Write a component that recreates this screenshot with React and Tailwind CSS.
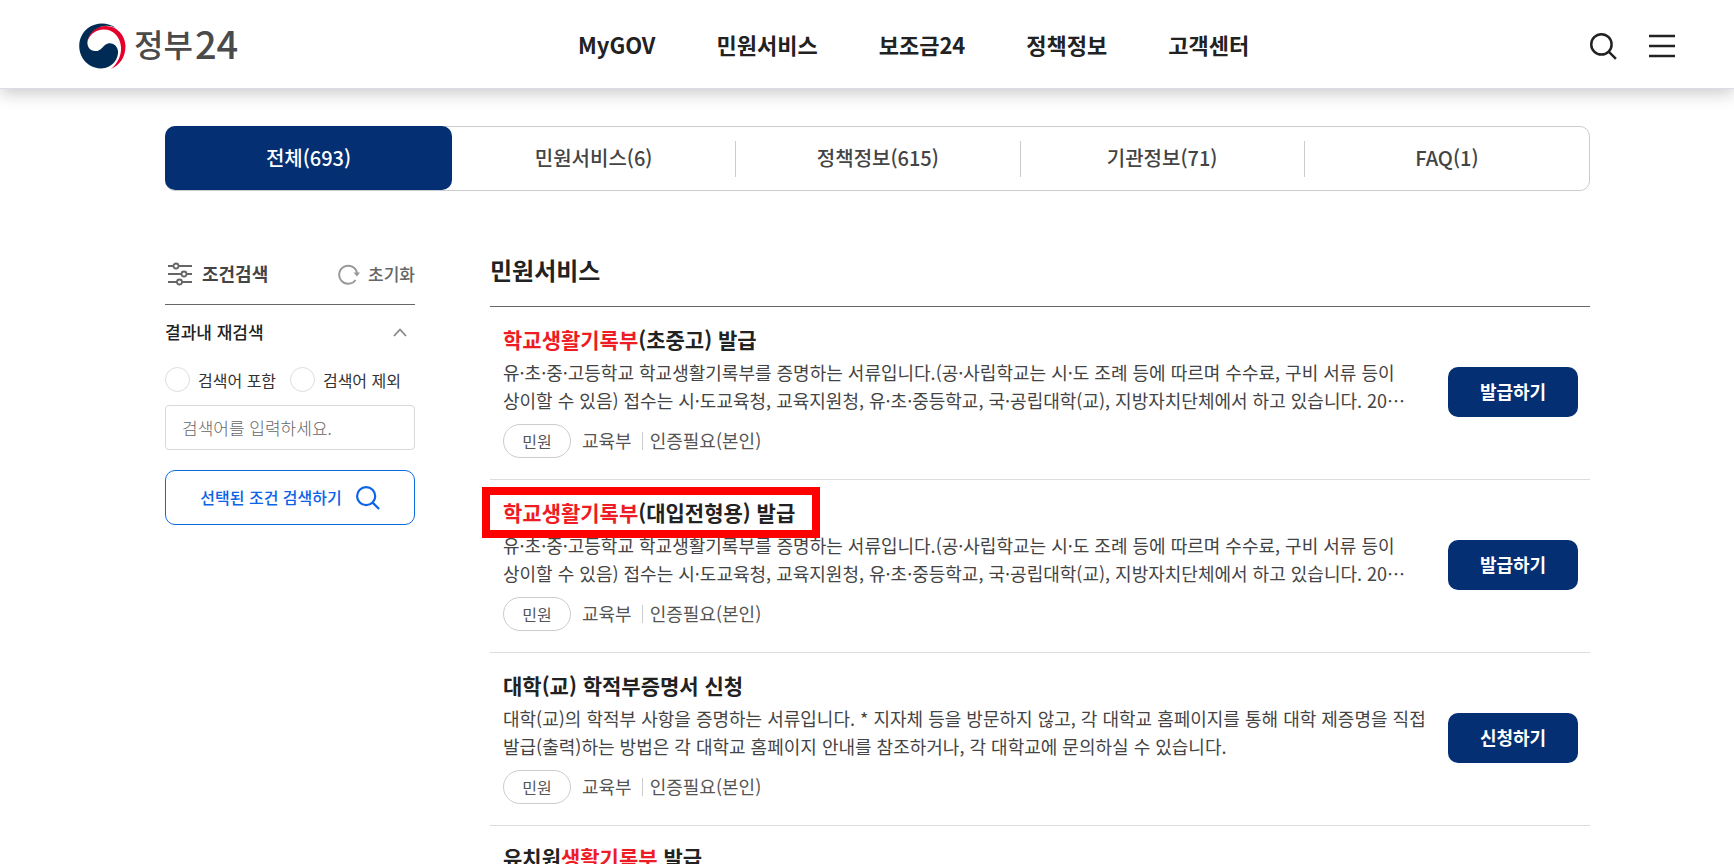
import React from 'react';

const NAV = ['MyGOV', '민원서비스', '보조금24', '정책정보', '고객센터'];

const TABS = ['전체(693)', '민원서비스(6)', '정책정보(615)', '기관정보(71)', 'FAQ(1)'];

const RECORD_LINES = [
  '유·초·중·고등학교 학교생활기록부를 증명하는 서류입니다.(공·사립학교는 시·도 조례 등에 따르며 수수료, 구비 서류 등이',
  '상이할 수 있음) 접수는 시·도교육청, 교육지원청, 유·초·중등학교, 국·공립대학(교), 지방자치단체에서 하고 있습니다. 20⋯',
];

const SERVICES = [
  { before: '', match: '학교생활기록부', after: '(초중고) 발급', lines: RECORD_LINES, action: '발급하기' },
  { before: '', match: '학교생활기록부', after: '(대입전형용) 발급', lines: RECORD_LINES, action: '발급하기', marked: true },
  {
    before: '대학(교) 학적부증명서 신청',
    match: '',
    after: '',
    lines: [
      '대학(교)의 학적부 사항을 증명하는 서류입니다. * 지자체 등을 방문하지 않고, 각 대학교 홈페이지를 통해 대학 제증명을 직접',
      '발급(출력)하는 방법은 각 대학교 홈페이지 안내를 참조하거나, 각 대학교에 문의하실 수 있습니다.',
    ],
    action: '신청하기',
  },
];

function SearchIcon({ className }) {
  return (
    <svg viewBox="0 0 26 26" className={className} fill="none" stroke="currentColor" strokeWidth="2.4" aria-hidden="true">
      <circle cx="11" cy="11" r="9.8" />
      <path d="M18 18l7 7" />
    </svg>
  );
}

function Emblem() {
  return (
    <svg viewBox="0 0 47 46" className="h-[46px] w-[47px]" aria-hidden="true">
      <path fill="#e4002b" d="M8 20C9 9 17 3 27 3C38 3 46 12 46.500 23C46.500 34 41 42 32 46C39 40 42.500 32 42 24C41 13 34 6.500 25 6.500C16 6.500 10 12 8 20Z" />
      <path fill="#002b54" d="M37 5C29 -1 17 -1 9 5C1 11 -2 22 2 32C6 42 17 47 26 45C35 43 39.500 35 39 28C38 21 31 18 26 22C22 26 20 28.500 16 28C10 27.500 7 22 9 16C12 6 25 -1 37 5Z" />
    </svg>
  );
}

function Header() {
  return (
    <header className="relative flex h-[89px] items-center border-b border-[#dcdce6] bg-white pl-[79px] pr-[59px] pt-1 shadow-[0_4px_16px_rgba(0,0,0,0.22)]">
      <a href="#home" className="flex w-[499px] items-center gap-2 text-[#4a4a4a]">
        <Emblem />
        <span className="flex items-center gap-0.5 pb-1.5 font-medium leading-none">
          <span className="text-[32px]">정부</span>
          <span className="text-[38px]">24</span>
        </span>
      </a>
      <nav className="flex flex-1 gap-[61px] pb-1 text-[22px] font-bold leading-8 text-[#222]">
        {NAV.map((item) => (
          <a key={item} href={'#' + item}>{item}</a>
        ))}
      </nav>
      <div className="flex items-center gap-8 text-[#222]">
        <button type="button" aria-label="검색"><SearchIcon className="block size-[27px]" /></button>
        <button type="button" aria-label="전체메뉴">
          <svg viewBox="0 0 26 26" className="block size-[26px]" stroke="currentColor" strokeWidth="2.4" aria-hidden="true">
            <path d="M0 3h26M0 13h26M0 23h26" />
          </svg>
        </button>
      </div>
    </header>
  );
}

function Tabs() {
  return (
    <div role="tablist" className="flex h-[65px] rounded-[10px] border border-[#ccc] text-[20px] font-medium text-[#444]">
      {TABS.map((tab, i) => (
        <button
          key={tab}
          type="button"
          role="tab"
          aria-selected={i === 0}
          className={
            i === 0
              ? '-ml-px -mt-px w-[287px] rounded-[10px] bg-[#042f73] text-white'
              : 'flex flex-1 items-center'
          }
        >
          {i === 0 ? tab : (
            <span className={i < 4 ? 'flex-1 border-r border-[#ccc] pb-0.5 leading-[34px]' : 'flex-1 pb-0.5 leading-[34px]'}>{tab}</span>
          )}
        </button>
      ))}
    </div>
  );
}

function Sidebar() {
  return (
    <aside className="w-[250px] shrink-0">
      <div className="flex h-[62px] items-center justify-between border-b border-[#666] text-[17px]">
        <h2 className="flex items-center gap-2.5 pl-[3px] text-[18px] font-bold text-[#444]">
          <svg viewBox="0 0 24 24" className="size-6" fill="none" stroke="#666" strokeWidth="1.8" aria-hidden="true">
            <path d="M0 4h5.500M10.500 4H24M0 12h13.500M18.500 12H24M0 20h9M14 20h10" />
            <circle cx="8" cy="4" r="2.500" />
            <circle cx="16" cy="12" r="2.500" />
            <circle cx="11.500" cy="20" r="2.500" />
          </svg>
          조건검색
        </h2>
        <button type="button" className="flex items-center gap-2 font-medium text-[#666]">
          <svg viewBox="0 0 22 22" className="size-[22px]" fill="none" stroke="#999" strokeWidth="2" aria-hidden="true">
            <path d="M17.500 17A9 9 0 1 1 19 10" />
            <path d="M15.500 9.500h6.500L19 13.500z" fill="#999" stroke="none" />
          </svg>
          초기화
        </button>
      </div>
      <button type="button" aria-expanded="true" className="flex h-[54px] w-full items-center justify-between pr-2 text-[17px] font-medium text-[#222]">
        결과내 재검색
        <svg viewBox="0 0 14 9" className="h-[9px] w-3.5" fill="none" stroke="#888" strokeWidth="1.8" aria-hidden="true">
          <path d="M1 8l6-6.500L13 8" />
        </svg>
      </button>
      <div className="flex justify-between pr-3.5 pt-2 text-[16px] leading-6 text-[#333]">
        {['검색어 포함', '검색어 제외'].map((label) => (
          <label key={label} className="flex items-center gap-2">
            <input type="radio" name="scope" className="size-[25px] appearance-none rounded-full border border-[#ddd] bg-white checked:border-8 checked:border-[#042f73]" />
            {label}
          </label>
        ))}
      </div>
      <input
        type="text"
        aria-label="검색어"
        placeholder="검색어를 입력하세요."
        className="mt-[13px] block h-[45px] w-full rounded border border-[#d8d8d8] px-4 text-[17px] font-light placeholder:text-[#666]"
      />
      <button type="button" className="mt-5 flex h-[55px] w-full items-center justify-center gap-3.5 rounded-[10px] border border-[#0a6be0] text-[16px] font-medium text-[#0a63e8]">
        <span className="pb-0.5">선택된 조건 검색하기</span>
        <SearchIcon className="size-6" />
      </button>
    </aside>
  );
}

function ServiceTitle({ item }) {
  return (
    <h3 className="relative text-[21px] font-bold leading-7 text-[#222]">
      <a href="#service">
        {item.before}
        {item.match && <em className="not-italic text-[#ee1c25]">{item.match}</em>}
        {item.after}
      </a>
      {item.marked && (
        <span className="pointer-events-none absolute -left-[21px] -top-[11px] h-[51px] w-[338px] border-8 border-[#f00]" />
      )}
    </h3>
  );
}

function Service({ item }) {
  return (
    <li className="flex h-[173px] items-center justify-between border-b border-[#ddd] pb-[3px] pl-[13px] pr-3">
      <div>
        <ServiceTitle item={item} />
        <p className="mt-[5px] text-[18px] leading-7 text-[#444]">
          {item.lines.map((line) => (
            <span key={line} className="block whitespace-nowrap">{line}</span>
          ))}
        </p>
        <div className="mt-2.5 flex items-center text-[18px] leading-7 text-[#555]">
          <span className="mr-[11px] flex h-[34px] w-[68px] items-center justify-center rounded-full border border-[#ccc] text-[16px]">민원</span>
          <span className="pb-0.5">교육부</span>
          <span className="ml-2.5 mr-[7px] h-[18px] w-px bg-[#ccc]" />
          <span className="pb-0.5">인증필요(본인)</span>
        </div>
      </div>
      <button type="button" className="h-[50px] w-[130px] shrink-0 rounded-[10px] bg-[#042f73] text-[18px] font-bold text-white">
        {item.action}
      </button>
    </li>
  );
}

export default function App() {
  return (
    <div lang="ko" className="min-h-screen bg-white font-['Noto_Sans_CJK_KR',sans-serif]">
      <Header />
      <main className="pl-[165px] pr-36 pt-[37px]">
        <Tabs />
        <div className="flex gap-[75px] pt-[52px]">
          <Sidebar />
          <section className="min-w-0 flex-1">
            <h2 className="h-16 border-b border-[#666] pt-[9px] text-[24px] font-bold leading-9 text-[#222]">민원서비스</h2>
            <ul>
              {SERVICES.map((item) => (
                <Service key={item.before + item.after} item={item} />
              ))}
              <li className="pl-[13px] pt-[17px]">
                <ServiceTitle item={{ before: '유치원', match: '생활기록부', after: ' 발급' }} />
              </li>
            </ul>
          </section>
        </div>
      </main>
    </div>
  );
}
